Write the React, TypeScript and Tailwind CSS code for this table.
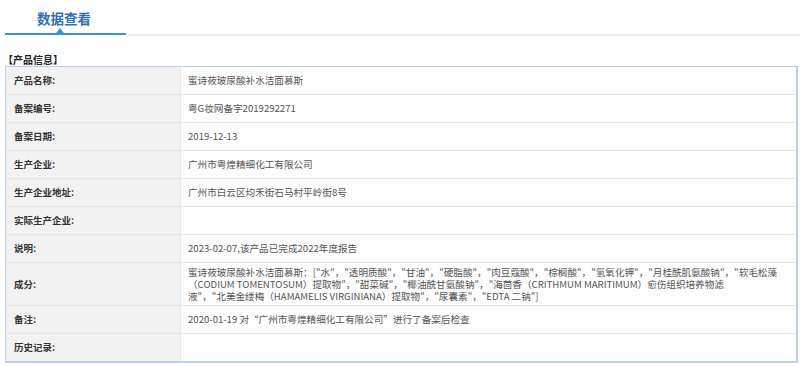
import React from "react";

const rows: { label: string; value: React.ReactNode; tall?: boolean }[] = [
  { label: "产品名称:", value: "蜜诗莜玻尿酸补水洁面慕斯" },
  { label: "备案编号:", value: "粤G妆网备字2019292271" },
  { label: "备案日期:", value: "2019-12-13" },
  { label: "生产企业:", value: "广州市粤煌精细化工有限公司" },
  { label: "生产企业地址:", value: "广州市白云区均禾街石马村平岭街8号" },
  { label: "实际生产企业:", value: "" },
  { label: "说明:", value: "2023-02-07,该产品已完成2022年度报告" },
  {
    label: "成分:",
    tall: true,
    value: (
      <>
        <div>蜜诗莜玻尿酸补水洁面慕斯：["水"，"透明质酸"，"甘油"，"硬脂酸"，"肉豆蔻酸"，"棕榈酸"，"氢氧化钾"，"月桂酰肌氨酸钠"，"软毛松藻</div>
        <div>（CODIUM TOMENTOSUM）提取物"，"甜菜碱"，"椰油酰甘氨酸钠"，"海茴香（CRITHMUM MARITIMUM）愈伤组织培养物滤</div>
        <div>液"，"北美金缕梅（HAMAMELIS VIRGINIANA）提取物"，"尿囊素"，"EDTA 二钠"]</div>
      </>
    ),
  },
  { label: "备注:", value: "2020-01-19 对“广州市粤煌精细化工有限公司”进行了备案后检查" },
  { label: "历史记录:", value: "" },
];

export default function App() {
  return (
    <div
      className="w-[800px] h-[366px] bg-white overflow-hidden flex flex-col"
      style={{ fontFamily: '"Microsoft YaHei", "Noto Sans CJK SC", "Noto Sans", sans-serif' }}
    >
      {/* Tab header */}
      <div className="flex pl-[5px] pt-[5px]">
        <div className="relative w-[121px] h-[30px] border-b-2 border-[#3d8fe0] pl-[32px]">
          <span className="text-[13.5px] leading-[18px] font-bold text-[#3070b8]">数据查看</span>
          <span className="absolute left-[51px] bottom-0 w-0 h-0 border-l-[4.5px] border-r-[4.5px] border-b-[5px] border-l-transparent border-r-transparent border-b-[#3d8fe0]" />
        </div>
        <div className="flex-1 h-[31px] border-b-2 border-[#ececec]" />
      </div>

      {/* Section title */}
      <div className="pl-[3px] pt-[18px] pb-[1px] text-[10px] leading-[11px] font-bold text-[#222]">
        【产品信息】
      </div>

      {/* Table */}
      <div className="ml-[5px] w-[793px] border border-[#bcd0ee] border-b-2 border-r-2">
        {rows.map((r, i) => (
          <div
            key={i}
            className={`flex ${i < rows.length - 1 ? "border-b border-[#e5e5e5]" : ""}`}
          >
            <div
              className={`w-[175px] shrink-0 bg-[#f2f2f2] border-r border-[#e5e5e5] pl-[8px] flex items-center text-[9.5px] font-bold text-[#333] ${
                r.tall ? "h-[42px]" : "h-[27px]"
              }`}
            >
              {r.label}
            </div>
            <div
              className={`flex-1 bg-[#fdfdfd] pl-[7px] flex items-center text-[9.6px] text-[#555] ${
                r.tall ? "h-[42px] leading-[12px]" : "h-[27px]"
              }`}
            >
              <div>{r.value}</div>
            </div>
          </div>
        ))}
      </div>
    </div>
  );
}
